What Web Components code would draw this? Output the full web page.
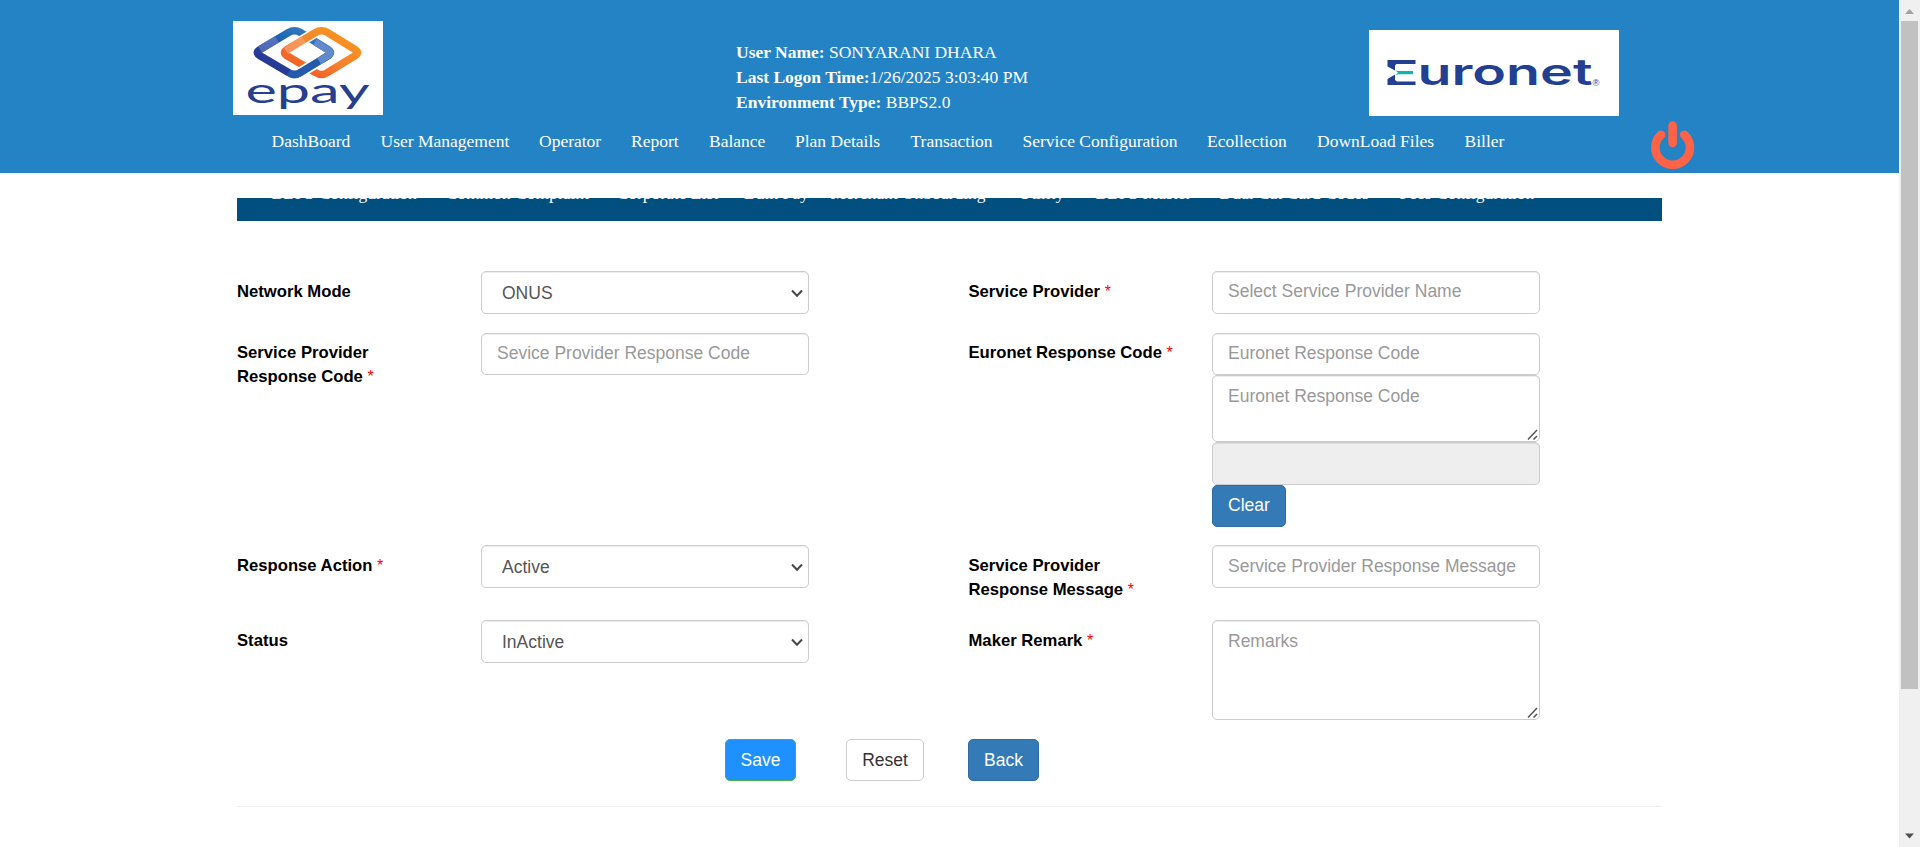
<!DOCTYPE html>
<html lang="en"><head><meta charset="utf-8"><title>epay - Response Code Mapping</title>
<style>
html,body{margin:0;height:100%;overflow:hidden;background:#fff}
body{font-family:"Liberation Sans",Arial,sans-serif}
</style></head><body>
<epay-app></epay-app>
<script>
function define(name, html){
  const t=document.createElement('template');t.innerHTML=html;
  customElements.define(name,class extends HTMLElement{
    connectedCallback(){
      if(this.shadowRoot)return;
      this.attachShadow({mode:'open'}).appendChild(t.content.cloneNode(true));
    }
  });
}

define('epay-logo',`<style>:host{display:block;width:150px;height:94px;background:#fff}svg{display:block}</style>
<svg width="150" height="94" viewBox="0 0 150 94" role="img" aria-label="epay">
<defs>
<linearGradient id="b" x1="0" y1="1" x2="1" y2="0"><stop offset="0" stop-color="#24318c"/><stop offset=".35" stop-color="#27409a"/><stop offset=".6" stop-color="#1b68b4"/><stop offset="1" stop-color="#4b86c8"/></linearGradient>
<linearGradient id="o" x1="0" y1="1" x2="1" y2="0"><stop offset="0" stop-color="#f04e23"/><stop offset=".5" stop-color="#f5822e"/><stop offset="1" stop-color="#f99a1c"/></linearGradient>
</defs>
<g fill="none" stroke-linejoin="round">
<path d="M27 28.500L55.500 11.500Q61.500 8 67.500 11.500L95 28.500Q100 31.600 95 34.700L67.500 51.500Q61.500 55.500 55.500 51.500L27 34.700Q21.500 31.600 27 28.500Z" stroke="url(#b)" stroke-width="7.500"/>
<path d="M27 28.500L44 18.400" stroke="#6f83cb" stroke-width="7.500" opacity=".6"/>
<path d="M56 27.300L82.500 11.500Q88.500 8 94.500 11.500" stroke="#fff" stroke-width="10.500"/>
<path d="M54 28.500L82.500 11.500Q88.500 8 94.500 11.500L122 28.500Q127 31.600 122 34.700L94.500 51.500Q88.500 55.500 82.500 51.500L54 34.700Q49 31.600 54 28.500Z" stroke="url(#o)" stroke-width="7.500"/>
<path d="M53 30L71 18.500" stroke="#fbb187" stroke-width="7.500" opacity=".5"/>
<path d="M89 38.400L67.500 51.500" stroke="#fff" stroke-width="11"/>
<path d="M96 34.100L67.500 51.500Q61.500 55.500 55.500 51.500" stroke="#245aab" stroke-width="7.500"/>
<path d="M82 21L95 29Q99.500 31.800 95 34.700L86 40" stroke="#6389cd" stroke-width="7"/>
</g>
<text x="12.500" y="82" textLength="124" lengthAdjust="spacingAndGlyphs" font-family="Lato,sans-serif" font-size="35" fill="#26408f">epay</text>
</svg>`);

define('euronet-logo',`<style>:host{display:block;width:250px;height:86px;background:#fff}svg{display:block}</style>
<svg width="250" height="86" viewBox="0 0 250 86" role="img" aria-label="Euronet">
<path fill="#233f92" d="M18.500 30H46.500V34H27.500L26 35.500V40.500L18.500 36.500ZM18.500 55H46.500V51.500H28L26 50V44.500L18.500 49Z"/>
<path fill="#12b5ae" d="M26.500 40.500L30 41H44V44.300H30L26.500 45L29 42.700Z"/>
<text x="48.500" y="55" textLength="175" lengthAdjust="spacingAndGlyphs" font-family="Inter,sans-serif" font-weight="600" font-size="36" fill="#233f92">uronet</text>
<text x="223.500" y="55.500" font-family="Liberation Sans,sans-serif" font-size="9.500" fill="#233f92">®</text>
</svg>`);

define('user-info',`<style>:host{display:block;color:#fff;font:17.5px/25px "Liberation Serif","Times New Roman",serif;white-space:nowrap}div{height:25px}</style>
<div><b>User Name:</b> SONYARANI DHARA</div><div><b>Last Logon Time:</b>1/26/2025 3:03:40 PM</div><div><b>Environment Type:</b> BBPS2.0</div>`);

define('power-button',`<style>:host{display:block;width:44px;height:49px}svg{display:block}</style>
<svg width="44" height="49" viewBox="0 0 44 49" fill="none" stroke="#ff6347" stroke-width="8.600" stroke-linecap="round"><path d="M10 13.700A17.300 17.300 0 1 0 33.300 13.700M21.600 4.500V22"/></svg>`);

define('nav-item',`<style>:host{display:block;flex:none;white-space:nowrap;font:17.5px/25px "Liberation Serif","Times New Roman",serif;color:#fff}</style><slot></slot>`);

define('app-header',`<style>
:host{display:block;height:173px;background:#2483c4}
.top{display:flex;height:121px;padding-left:233px;box-sizing:border-box}
epay-logo{margin-top:21px}user-info{margin:40px 0 0 353px;width:633px}euronet-logo{margin-top:30px}
nav{display:flex;padding-left:271.500px;height:52px}
.items{display:flex;width:1379px;padding-top:8px}
</style>
<div class="top"><epay-logo></epay-logo><user-info></user-info><euronet-logo></euronet-logo></div>
<nav><div class="items">
<nav-item style="width:109px">DashBoard</nav-item><nav-item style="width:158.500px">User Management</nav-item><nav-item style="width:92px">Operator</nav-item><nav-item style="width:78px">Report</nav-item><nav-item style="width:86px">Balance</nav-item><nav-item style="width:115.500px">Plan Details</nav-item><nav-item style="width:112px">Transaction</nav-item><nav-item style="width:184.500px">Service Configuration</nav-item><nav-item style="width:110px">Ecollection</nav-item><nav-item style="width:147.500px">DownLoad Files</nav-item><nav-item>Biller</nav-item>
</div><power-button></power-button></nav>`);

/* The item line starts above the bar, so only its lower edge shows on the blue. */
define('sub-nav',`<style>:host{display:flex;margin:25px 0 0 237px;width:1425px;height:23px;background:#004f7f}
div{display:flex;padding-left:34.500px;margin-top:-17px}</style>
<div><nav-item style="width:174px">BBPS Configuration</nav-item><nav-item style="width:171px">Common Complaint</nav-item><nav-item style="width:127.500px">Corporate List</nav-item><nav-item style="width:86.500px">Bulk Pay</nav-item><nav-item style="width:188px">Merchant Onboarding</nav-item><nav-item style="width:77px">Utility</nav-item><nav-item style="width:124px">BBPS Master</nav-item><nav-item style="width:180px">Dual Cat Card Codes</nav-item><nav-item>Fees Configuration</nav-item></div>`);

define('form-label',`<style>:host{display:block;font:bold 16.67px/24px "Liberation Sans",Arial,sans-serif;color:#000;padding-top:var(--lt,9px)}
span{color:red;font-weight:400;font-size:16px;display:none}:host([required]) span{display:inline}</style><slot></slot> <span>*</span>`);

const CONTROL=`:host{display:block;position:relative}
input,select,textarea{display:block;box-sizing:border-box;width:100%;height:var(--h,42px);margin:0;border:1px solid #ccc;border-radius:5px;background:#fff;color:#555;font:17.5px/25px "Liberation Sans",Arial,sans-serif;padding:7px 15px 9px;box-shadow:inset 0 1px 1px rgba(0,0,0,.075);outline:none;resize:none;overflow:hidden}
::placeholder{color:#999;opacity:1}`;
class TextField extends HTMLElement{
  connectedCallback(){
    if(this.shadowRoot)return;
    const r=this.attachShadow({mode:'open'}), p=this.getAttribute('placeholder')||'';
    r.innerHTML=`<style>${CONTROL}input{padding:8px 15px}input:disabled{background:#eee}:host(.tight) input{padding:7px 15px 9px}</style><input placeholder="${p}"${this.hasAttribute('disabled')?' disabled':''}>`;
  }
}
customElements.define('text-field',TextField);
class TextBox extends HTMLElement{
  connectedCallback(){
    if(this.shadowRoot)return;
    this.attachShadow({mode:'open'}).innerHTML=`<style>${CONTROL}svg{position:absolute;right:2px;bottom:2px}</style><textarea style="padding-top:var(--tp,7px)" placeholder="${this.getAttribute('placeholder')}"></textarea><svg width="11" height="11" stroke="#555" stroke-width="1.500"><path d="M1 10.500L10 1M6.500 10.500L10 7"/></svg>`;
  }
}
customElements.define('text-box',TextBox);
class SelectField extends HTMLElement{
  connectedCallback(){
    if(this.shadowRoot)return;
    this.attachShadow({mode:'open'}).innerHTML=`<style>${CONTROL}select{appearance:none;padding:9px 20px 7px}svg{position:absolute;right:6px;top:calc(50% - 4px)}</style><select><option>${this.getAttribute('value')}</option></select><svg width="12" height="9" fill="none" stroke="#484848" stroke-width="2"><path d="M1 1.500L6 6.800L11 1.500"/></svg>`;
  }
}
customElements.define('select-field',SelectField);

define('push-button',`<style>:host{display:block;box-sizing:border-box;height:42px;width:71px;border:1px solid #2e6da4;border-radius:5px;background:#337ab7;color:#fff;font:17.5px/25px "Liberation Sans",Arial,sans-serif;text-align:center;padding-top:7px}
:host([kind=save]){background:#1e90ff;border-color:#4cae4c}:host([kind=reset]){background:#fff;border-color:#ccc;color:#333}</style><slot></slot>`);

define('form-row',`<style>:host{display:grid;grid-template-columns:244px 328px 159.500px 243.500px 328px;align-items:start;height:var(--row)}
::slotted(:nth-child(3)){grid-column:4}</style><slot></slot>`);

define('response-form',`<style>:host{display:block;margin:50px 0 0 237px;width:1425px}
.actions{display:flex;padding-left:488px;height:67px}.actions push-button{padding-top:8px}hr{margin:0;border:0;border-top:1px solid #eee}
form-label{max-width:175px}.wide{max-width:230px}</style>
<form-row style="--row:62px;--h:43px"><form-label>Network Mode</form-label><select-field value="ONUS"></select-field><form-label required>Service Provider</form-label><text-field class="tight" placeholder="Select Service Provider Name"></text-field></form-row>
<form-row style="--row:212px;--lt:8px"><form-label required>Service Provider Response Code</form-label><text-field class="tight" placeholder="Sevice Provider Response Code"></text-field><form-label class="wide" required>Euronet Response Code</form-label>
<div><text-field class="tight" placeholder="Euronet Response Code"></text-field><text-box style="--h:67px;--tp:8px" placeholder="Euronet Response Code"></text-box><text-field style="--h:43px" disabled></text-field><push-button style="width:74px">Clear</push-button></div></form-row>
<form-row style="--row:75px;--h:43px"><form-label required>Response Action</form-label><select-field value="Active"></select-field><form-label required>Service Provider Response Message</form-label><text-field placeholder="Service Provider Response Message"></text-field></form-row>
<form-row style="--row:119px;--h:43px"><form-label>Status</form-label><select-field value="InActive"></select-field><form-label required>Maker Remark</form-label><text-box style="--h:100px;--tp:8px" placeholder="Remarks"></text-box></form-row>
<div class="actions"><push-button kind="save">Save</push-button><push-button kind="reset" style="width:78px;margin:0 44px 0 50px">Reset</push-button><push-button>Back</push-button></div><hr>`);

define('scroll-rail',`<style>:host{display:flex;flex-direction:column;align-items:center;width:21px;height:847px;background:#f0f0f0}
svg{display:block;flex:none}i{display:block;width:17px;height:668px;margin-bottom:138px;background:#c1c1c1}</style>
<svg width="21" height="21"><path d="M6 14L10.500 9L15 14Z" fill="#a3a3a3"/></svg><i></i><svg width="21" height="20"><path d="M6 6.500H15L10.500 11.500Z" fill="#505050"/></svg>`);

define('epay-app',`<style>:host{display:grid;grid-template-columns:1899px 21px;height:847px}</style>
<main><app-header></app-header><sub-nav></sub-nav><response-form></response-form></main><scroll-rail></scroll-rail>`);
</script></body></html>
